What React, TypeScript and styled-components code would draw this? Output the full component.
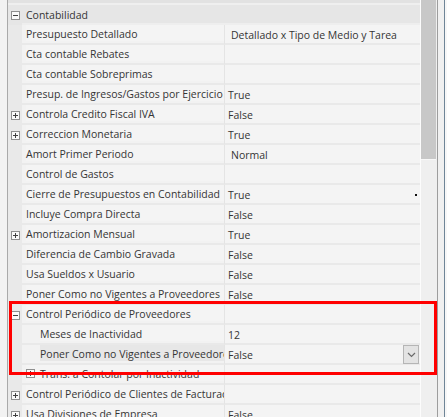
import React from 'react';
import styled, { createGlobalStyle } from 'styled-components';

const GlobalStyle = createGlobalStyle`
  html, body {
    margin: 0;
    padding: 0;
    background: #f2f2f2;
    overflow: hidden;
  }
  body {
    font-family: "Open Sans", "Liberation Sans", sans-serif;
  }
`;

const Frame = styled.div`
  position: relative;
  display: flex;
  width: 447px;
  height: 417px;
  overflow: hidden;
  background: #f2f2f2;
`;

const LeftEdge = styled.div`
  width: 7px;
  flex-shrink: 0;
  border-right: 1px solid #a9a9a9;
`;

const Grid = styled.div`
  width: 412px;
  flex-shrink: 0;
  display: flex;
  flex-direction: column;
  font-size: 10.5px;
  color: #353535;
`;

const TopSlice = styled.div`
  height: 3px;
  flex-shrink: 0;
  background: #e2e2e2;
  border-bottom: 2px solid #efefef;
`;

const Row = styled.div`
  display: flex;
  height: 20px;
  flex-shrink: 0;
`;

const Gutter = styled.div<{ $category?: boolean }>`
  width: 14px;
  flex-shrink: 0;
  display: flex;
  align-items: center;
  justify-content: center;
  background: ${p => (p.$category ? '#e6e6e6' : '#e9e9e9')};
`;

const CategoryCell = styled.div`
  flex: 1;
  height: 18px;
  line-height: 20px;
  padding-left: 4px;
  background: #e6e6e6;
  border-bottom: 2px solid #eeeeee;
  white-space: nowrap;
`;

const NameCell = styled.div<{ $indent: number; $selected?: boolean }>`
  box-sizing: border-box;
  width: 203px;
  flex-shrink: 0;
  height: 20px;
  display: flex;
  align-items: center;
  gap: 5px;
  padding: 0 0 2px ${p => 4 + p.$indent}px;
  background: ${p => (p.$selected ? '#e7e7e7' : '#f4f4f4')};
  background-clip: content-box;
  border-right: 1px solid #e4e4e4;
  border-bottom: 2px solid #e9e9e9;
  white-space: nowrap;
  overflow: hidden;
  span {
    line-height: 18px;
    padding-top: 2px;
  }
`;

const ValueCell = styled.div<{ $pad: number }>`
  box-sizing: border-box;
  flex: 1;
  height: 20px;
  display: flex;
  align-items: flex-start;
  padding-left: ${p => p.$pad}px;
  background: #f4f4f4;
  border-bottom: 2px solid #e9e9e9;
  white-space: nowrap;
  span {
    line-height: 20px;
  }
`;

const Dot = styled.i`
  width: 2px;
  height: 2px;
  margin: 9px 3px 0 auto;
  background: #111;
`;

const DropButton = styled.div`
  box-sizing: border-box;
  width: 16px;
  height: 19px;
  margin: 0 1px 0 auto;
  display: flex;
  align-items: center;
  justify-content: center;
  background: #e3e3e3;
  border: 1px solid #b5b5b5;
`;

const Scroll = styled.div`
  width: 16px;
  flex-shrink: 0;
  border-left: 1px solid #fcfcfc;
  background: #efefef;
`;

const Thumb = styled.div`
  width: 15px;
  height: 159px;
  background: #c8c8c8;
  border-bottom: 1px solid #f8f8f8;
`;

const RightRail = styled.div`
  width: 6px;
  flex-shrink: 0;
  background: #f0f0f0;
  border-left: 1px solid #9d9d9d;
  border-right: 1px solid #6f8597;
`;

const Tail = styled.div`
  flex: 1;
  background: #f7f7f7;
`;

const Highlight = styled.div`
  position: absolute;
  left: 9px;
  top: 301px;
  width: 428px;
  height: 74px;
  box-sizing: border-box;
  border: 3px solid #ff0000;
  pointer-events: none;
`;

const ToggleIcon = ({ open }: { open: boolean }) => (
  <svg width="9" height="9" viewBox="0 0 9 9" style={{ flexShrink: 0 }}>
    <rect x="0.5" y="0.5" width="8" height="8" fill="#fafafa" stroke="#8f8f8f" />
    <line x1="2" y1="4.5" x2="7" y2="4.5" stroke="#404040" />
    {!open && <line x1="4.5" y1="2" x2="4.5" y2="7" stroke="#404040" />}
  </svg>
);

const Chevron = () => (
  <svg width="9" height="6" viewBox="0 0 9 6">
    <polyline points="1,1 4.5,4.5 8,1" fill="none" stroke="#6a6a6a" strokeWidth="1.2" />
  </svg>
);

interface Prop {
  name: string;
  value?: string;
  toggle?: 'open' | 'closed';
  nested?: boolean;
  wide?: boolean;
  dot?: boolean;
  selected?: boolean;
  dropdown?: boolean;
}

const props: Prop[] = [
  { name: 'Presupuesto Detallado', value: 'Detallado x Tipo de Medio y Tarea', wide: true },
  { name: 'Cta contable Rebates' },
  { name: 'Cta contable Sobreprimas' },
  { name: 'Presup. de Ingresos/Gastos por Ejercicio', value: 'True' },
  { name: 'Controla Credito Fiscal IVA', value: 'False', toggle: 'closed' },
  { name: 'Correccion Monetaria', value: 'True', toggle: 'closed' },
  { name: 'Amort Primer Periodo', value: 'Normal', wide: true },
  { name: 'Control de Gastos' },
  { name: 'Cierre de Presupuestos en Contabilidad', value: 'True', dot: true },
  { name: 'Incluye Compra Directa', value: 'False' },
  { name: 'Amortizacion Mensual', value: 'True', toggle: 'closed' },
  { name: 'Diferencia de Cambio Gravada', value: 'False' },
  { name: 'Usa Sueldos x Usuario', value: 'False' },
  { name: 'Poner Como no Vigentes a Proveedores', value: 'False' },
  { name: 'Control Periódico de Proveedores', toggle: 'open' },
  { name: 'Meses de Inactividad', value: '12', nested: true },
  { name: 'Poner Como no Vigentes a Proveedores', value: 'False', nested: true, selected: true, dropdown: true },
  { name: 'Trans. a Contolar por Inactividad', toggle: 'closed', nested: true },
  { name: 'Control Periódico de Clientes de Facturación', toggle: 'closed' },
  { name: 'Usa Divisiones de Empresa', value: 'False', toggle: 'closed' },
];

const PropertyRow = ({ p }: { p: Prop }) => {
  const gutterIcon = p.toggle && !p.nested;
  const innerIcon = p.toggle && p.nested;
  const indent = p.nested ? (innerIcon ? 0 : 14) : 0;
  return (
    <Row>
      <Gutter>{gutterIcon && <ToggleIcon open={p.toggle === 'open'} />}</Gutter>
      <NameCell $indent={indent} $selected={p.selected}>
        {innerIcon && <ToggleIcon open={p.toggle === 'open'} />}
        <span>{p.name}</span>
      </NameCell>
      <ValueCell $pad={p.wide ? 6 : 3}>
        {p.value && <span>{p.value}</span>}
        {p.dot && <Dot />}
        {p.dropdown && (
          <DropButton>
            <Chevron />
          </DropButton>
        )}
      </ValueCell>
    </Row>
  );
};

const App = () => (
  <>
    <GlobalStyle />
    <Frame>
      <LeftEdge />
      <Grid>
        <TopSlice />
        <Row>
          <Gutter $category>
            <ToggleIcon open />
          </Gutter>
          <CategoryCell>Contabilidad</CategoryCell>
        </Row>
        {props.map((p, i) => (
          <PropertyRow key={i} p={p} />
        ))}
      </Grid>
      <Scroll>
        <Thumb />
      </Scroll>
      <RightRail />
      <Tail />
      <Highlight />
    </Frame>
  </>
);

export default App;
